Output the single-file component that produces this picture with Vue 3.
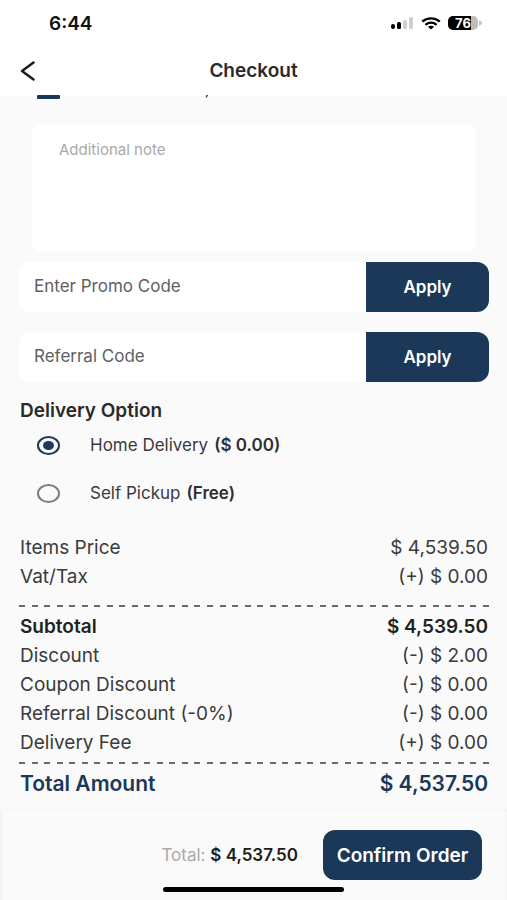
<script setup>
import { ref } from 'vue'

const note = ref('')
const promo = ref('')
const referral = ref('')
const delivery = ref('home')

const options = [
  { id: 'home', label: 'Home Delivery', price: '($ 0.00)' },
  { id: 'pickup', label: 'Self Pickup', price: '(Free)' },
]

const itemRows = [
  { label: 'Items Price', value: '$ 4,539.50' },
  { label: 'Vat/Tax', value: '(+) $ 0.00' },
]

const chargeRows = [
  { label: 'Subtotal', value: '$ 4,539.50', strong: true },
  { label: 'Discount', value: '(-) $ 2.00' },
  { label: 'Coupon Discount', value: '(-) $ 0.00' },
  { label: 'Referral Discount (-0%)', value: '(-) $ 0.00' },
  { label: 'Delivery Fee', value: '(+) $ 0.00' },
]
</script>

<template>
  <div class="screen">
    <div class="status">
      <span class="time">6:44</span>
      <div class="indicators">
        <svg class="signal" viewBox="0 0 24 14" aria-hidden="true">
          <rect x="1" y="8" width="4" height="5" rx="2" fill="#000" />
          <rect x="7" y="6" width="4" height="7" rx="1.5" fill="#000" />
          <rect x="13" y="4" width="4" height="9" rx="1.5" fill="#d0d0d0" />
          <rect x="19" y="1" width="4" height="12" rx="1.5" fill="#d0d0d0" />
        </svg>
        <svg class="wifi" viewBox="0 0 20 13" aria-hidden="true">
          <path d="M1.2 4.6C6 .3 14 .3 18.8 4.6" fill="none" stroke="#000" stroke-width="2.4" />
          <path d="M4.4 7.8C7.6 5 12.4 5 15.6 7.8" fill="none" stroke="#000" stroke-width="2.3" />
          <path d="M6.9 9.8C8.7 8.3 11.3 8.3 13.1 9.8L10 12.6Z" fill="#000" />
        </svg>
        <div class="battery">
          <span class="cell">76</span>
          <svg class="cap" viewBox="0 0 3 6" aria-hidden="true"><path d="M0 0Q3 1.5 3 3T0 6Z" fill="#c4c4c4" /></svg>
        </div>
      </div>
    </div>

    <header class="bar">
      <button class="back" type="button" aria-label="Back">
        <svg viewBox="0 0 16 20" aria-hidden="true">
          <path d="M13.5 1.5L2 10L13.5 18.5" fill="none" stroke="#1c1c1c" stroke-width="2.5" stroke-linecap="round" stroke-linejoin="round" />
        </svg>
      </button>
      <h1>Checkout</h1>
    </header>

    <main>
      <div class="clipped">
        <span class="stub"></span>
        <svg class="tail" viewBox="0 0 4 4" aria-hidden="true"><path d="M1.3 0H3.2L1.8 2.4H.6Z" fill="#444" /></svg>
      </div>

      <textarea v-model="note" class="note" placeholder="Additional note" aria-label="Additional note"></textarea>

      <form class="code" @submit.prevent>
        <input v-model="promo" type="text" placeholder="Enter Promo Code" aria-label="Enter Promo Code" />
        <button type="submit">Apply</button>
      </form>
      <form class="code second" @submit.prevent>
        <input v-model="referral" type="text" placeholder="Referral Code" aria-label="Referral Code" />
        <button type="submit">Apply</button>
      </form>

      <section class="delivery">
        <h2>Delivery Option</h2>
        <label v-for="o in options" :key="o.id" class="option">
          <input v-model="delivery" type="radio" name="delivery" :value="o.id" />
          <span>{{ o.label }}</span>
          <strong>{{ o.price }}</strong>
        </label>
      </section>

      <section class="summary">
        <div v-for="r in itemRows" :key="r.label" class="row">
          <span>{{ r.label }}</span><span>{{ r.value }}</span>
        </div>
        <div class="dashes wide"><i v-for="n in 38" :key="n"></i></div>
        <div v-for="r in chargeRows" :key="r.label" class="row" :class="{ strong: r.strong }">
          <span>{{ r.label }}</span><span>{{ r.value }}</span>
        </div>
        <div class="dashes"><i v-for="n in 38" :key="n"></i></div>
        <div class="row total">
          <span>Total Amount</span><span>$ 4,537.50</span>
        </div>
      </section>
    </main>

    <footer>
      <p>Total: <strong>$ 4,537.50</strong></p>
      <button type="button" class="confirm">Confirm Order</button>
      <div class="home"></div>
    </footer>
  </div>
</template>

<style>
body {
  margin: 0;
  background: #fafafa;
}
</style>

<style scoped>
* {
  box-sizing: border-box;
}
.screen {
  display: flex;
  flex-direction: column;
  min-height: 100vh;
  background: #fafafa;
  color: #3a3a3a;
  font-family: Inter, Roboto, sans-serif;
}
button,
input,
textarea {
  border: 0;
  margin: 0;
  font-family: inherit;
}
.status {
  display: flex;
  justify-content: space-between;
  align-items: center;
  height: 46px;
  padding: 0 25px 0 49px;
  background: #fff;
}
.time {
  color: #111;
  font-size: 19px;
  font-weight: 600;
}
.indicators {
  display: flex;
  align-items: center;
  gap: 7px;
}
.signal {
  width: 24px;
  height: 14px;
}
.wifi {
  width: 20px;
  height: 13px;
}
.battery {
  display: flex;
  align-items: center;
  gap: 1px;
}
.cell {
  width: 30px;
  height: 14px;
  border-radius: 5px;
  background: linear-gradient(90deg, #000 76%, #bdbdbd 76%);
  color: #fff;
  font-size: 13px;
  font-weight: 700;
  line-height: 14px;
  text-align: center;
}
.cap {
  width: 3px;
  height: 6px;
}
.bar {
  display: grid;
  grid-template-columns: 56px 1fr 56px;
  align-items: center;
  height: 50px;
  background: #fff;
}
.back {
  display: flex;
  padding: 0 0 0 20px;
  background: none;
}
.back svg {
  width: 16px;
  height: 20px;
}
h1 {
  margin: 0;
  color: #2a2a2a;
  font-size: 19px;
  font-weight: 600;
  line-height: 24px;
  text-align: center;
}
main {
  padding: 0 18px 0 19px;
}
.clipped {
  position: relative;
  height: 28px;
}
.stub {
  position: absolute;
  top: -1px;
  left: 18px;
  width: 23px;
  height: 4px;
  border-radius: 1px;
  background: #1b3858;
}
.tail {
  position: absolute;
  top: -1px;
  left: 186px;
  width: 4px;
  height: 4px;
}
.note {
  display: block;
  width: calc(100% - 26px);
  height: 128px;
  margin: 0 13px 10px;
  padding: 17px 27px;
  border-radius: 10px;
  background: #fff;
  color: #3a3a3a;
  font-size: 15px;
  line-height: 18px;
  resize: none;
}
.note::placeholder {
  color: #a9a9a9;
}
.code {
  display: flex;
  height: 50px;
  border-radius: 12px;
  overflow: hidden;
  background: #fff;
}
.second {
  margin-top: 20px;
}
.code input {
  flex: 1;
  min-width: 0;
  padding: 0 15px 2px;
  background: #fff;
  color: #3a3a3a;
  font-size: 17px;
}
.code input::placeholder {
  color: #606060;
  opacity: 1;
}
.code button {
  width: 123px;
  background: #1b3858;
  color: #fff;
  font-size: 17px;
  font-weight: 600;
}
.delivery {
  padding: 19px 1px 0;
}
h2 {
  margin: 0;
  color: #2a2a2a;
  font-size: 19px;
  font-weight: 600;
  line-height: 20px;
}
.option {
  display: flex;
  align-items: center;
  height: 48px;
  padding-left: 17px;
  font-size: 17px;
}
.option input {
  appearance: none;
  display: grid;
  place-items: center;
  width: 23px;
  height: 19px;
  margin-right: 30px;
  border: 2px solid #7d7d7d;
  border-radius: 50%;
}
.option input:checked {
  border-color: #1b3858;
}
.option input:checked::before {
  content: '';
  width: 11px;
  height: 9px;
  border-radius: 50%;
  background: #1b3858;
}
.option strong {
  margin-left: 6px;
  color: #2f2f2f;
  font-weight: 600;
}
.summary {
  padding: 16px 1px 10px;
}
.row {
  display: flex;
  justify-content: space-between;
  font-size: 19px;
  line-height: 29px;
}
.strong {
  color: #222;
  font-weight: 600;
}
.total {
  color: #1b3858;
  font-size: 21px;
  font-weight: 600;
  line-height: 30px;
}
.dashes {
  display: flex;
  justify-content: space-between;
  margin: 5px -1px;
}
.wide {
  margin-top: 14px;
}
.dashes i {
  width: 6px;
  height: 2px;
  background: #6a6a6a;
}
footer {
  position: relative;
  display: flex;
  justify-content: flex-end;
  align-items: flex-start;
  gap: 25px;
  height: 91px;
  margin-top: auto;
  padding: 20px 24px 0;
  border: 1px solid #f3f3f3;
  border-width: 1px 1px 0 2px;
}
footer p {
  margin: 0;
  color: #aaa;
  font-size: 17px;
  line-height: 50px;
}
footer strong {
  color: #1c1c1c;
  font-weight: 600;
}
.confirm {
  width: 159px;
  height: 50px;
  padding: 0;
  border-radius: 12px;
  background: #1b3858;
  color: #fff;
  font-size: 19px;
  font-weight: 600;
}
.home {
  position: absolute;
  bottom: 8px;
  left: 50%;
  width: 181px;
  height: 5px;
  margin-left: -91px;
  border-radius: 3px;
  background: #000;
}
</style>
